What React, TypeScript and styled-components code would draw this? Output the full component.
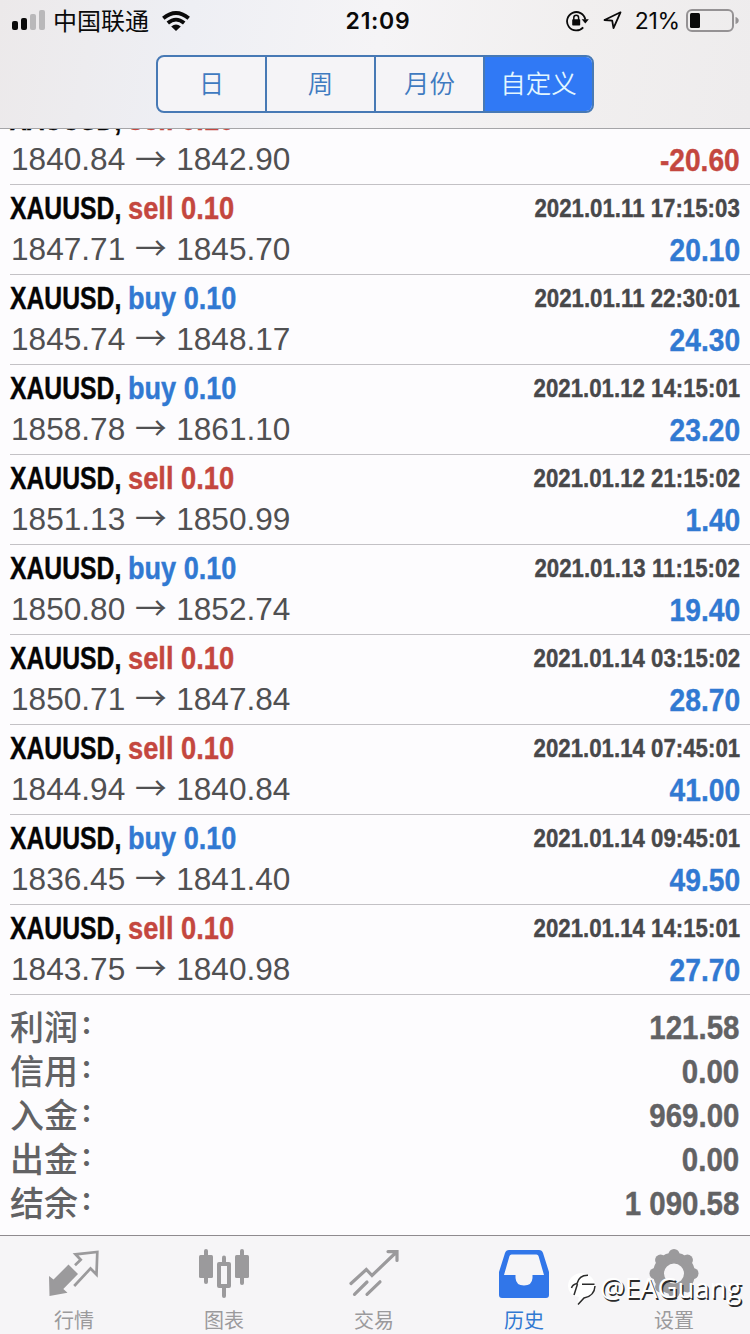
import React from "react";
import styled, { createGlobalStyle } from "styled-components";

const BLUE = "#3179d2";
const RED = "#c4473f";

const Global = createGlobalStyle`
  * { box-sizing: border-box; }
  body { margin: 0; background: #fdfcfe; }
`;

const Screen = styled.div`
  display: flex;
  flex-direction: column;
  width: 750px;
  height: 1334px;
  overflow: hidden;
  background: #fdfcfe;
  font-family: "Liberation Sans", "Noto Sans CJK SC", sans-serif;
`;

const Header = styled.header`
  flex: none;
  height: 129px;
  border-bottom: 1px solid #a5a5a8;
  background: linear-gradient(100deg, #ece9ea 0%, #eeeff4 25%, #f5f4f6 50%, #f1efef 75%, #eeeced 100%);
`;

const StatusBar = styled.div`
  display: grid;
  grid-template-columns: 1fr auto 1fr;
  align-items: center;
  height: 41px;
  padding: 0 11px 0 12px;
  color: #0a0a0a;
`;

const StatusGroup = styled.div<{ $end?: boolean }>`
  display: flex;
  align-items: center;
  justify-content: ${(p) => (p.$end ? "flex-end" : "flex-start")};
`;

const Carrier = styled.span`
  margin: 0 13px 0 8px;
  padding-bottom: 3px;
  font: 24px/37px "Noto Sans CJK SC", sans-serif;
`;

const Clock = styled.span`
  padding-left: 5px;
  font: 600 23px/40px Inter, sans-serif;
  letter-spacing: 0.7px;
`;

const Percent = styled.span`
  margin: 0 6px 0 13px;
  font: 23px/40px Inter, sans-serif;
  letter-spacing: -0.2px;
`;

const Segments = styled.div`
  display: flex;
  width: 438px;
  height: 58px;
  margin: 14px 0 0 156px;
  border: 2px solid #4779b5;
  border-radius: 8px;
  background: #f5f4f7;
  overflow: hidden;
`;

const Segment = styled.button<{ $active?: boolean }>`
  flex: 1;
  padding: 0 0 4px;
  border: 0;
  border-right: ${(p) => (p.$active ? "0" : "2px solid #4779b5")};
  background: ${(p) => (p.$active ? "#3079f5" : "transparent")};
  color: ${(p) => (p.$active ? "#e2f6ff" : "#3f7ac0")};
  font: 350 25.5px/50px "Noto Sans CJK SC", sans-serif;
`;

const History = styled.main`
  flex: none;
  height: 866px;
  overflow: hidden;
`;

const Deals = styled.div`
  margin-top: -34px;
`;

const Deal = styled.article`
  height: 90px;
  margin-left: 10px;
  padding-right: 10px;
  border-bottom: 1px solid #c3c1c5;
`;

const DealLine = styled.div<{ $h: number }>`
  display: flex;
  justify-content: space-between;
  height: ${(p) => p.$h}px;
  line-height: ${(p) => p.$h}px;
`;

const Narrow = styled.span<{ $scale: number; $size: number; $color: string; $right?: boolean }>`
  display: inline-block;
  transform: scaleX(${(p) => p.$scale});
  transform-origin: ${(p) => (p.$right ? "right" : "left")} center;
  color: ${(p) => p.$color};
  font-size: ${(p) => p.$size}px;
  font-weight: 700;
  -webkit-text-stroke: 0.4px currentColor;
  white-space: nowrap;
`;

const Title = styled.div`
  display: grid;
  grid-template-columns: 118px auto;
`;

const Prices = styled.div<{ $h: number }>`
  display: flex;
  height: ${(p) => p.$h}px;
  padding-left: 1px;
  line-height: ${(p) => p.$h}px;
  color: #505052;
  font-size: 31.6px;
`;

const Arrow = styled.span`
  width: 51px;
  text-align: center;
  font-family: "Noto Sans CJK SC", sans-serif;
  line-height: 29px;
`;

const Summary = styled.section`
  flex: 1;
  padding: 11px 11px 0 10px;
`;

const SummaryRow = styled.div`
  display: flex;
  justify-content: space-between;
  height: 44px;
  line-height: 44px;
`;

const SummaryLabel = styled.span`
  display: flex;
  height: 39px;
  color: #626264;
  font: 500 34px/39px "Noto Sans CJK SC", sans-serif;
`;

const Colon = styled.span`
  padding-left: 2px;
  font-size: 26px;
  font-weight: 700;
  line-height: 34px;
`;

const TabBar = styled.nav`
  position: relative;
  display: flex;
  flex: none;
  height: 99px;
  border-top: 1px solid #8f8b8f;
  background: #f6f5f7;
`;

const Tab = styled.div<{ $active?: boolean }>`
  display: flex;
  flex-direction: column;
  align-items: center;
  width: 150px;
  padding: 13px 2px 0 0;
  color: ${(p) => (p.$active ? BLUE : "#9b9a9c")};
`;

const TabLabel = styled.span`
  margin-top: 7px;
  font: 20px/28px "Noto Sans CJK SC", sans-serif;
`;

const Watermark = styled.div`
  position: absolute;
  left: 567px;
  top: 35px;
  display: flex;
  align-items: center;
  height: 36px;
  color: #fff;
  font: 400 27px/36px "Open Sans", sans-serif;
  text-shadow: 1.5px 1.5px 0 #2b2b2b;
  white-space: nowrap;
`;

const Handle = styled.span`
  display: inline-block;
  margin: -3px 0 0 3px;
  transform: scaleX(1.02);
  transform-origin: left center;
`;

const deals: [string, string, string, string, string][] = [
  ["sell", "1840.84", "1842.90", "2021.01.11 14:15:01", "-20.60"],
  ["sell", "1847.71", "1845.70", "2021.01.11 17:15:03", "20.10"],
  ["buy", "1845.74", "1848.17", "2021.01.11 22:30:01", "24.30"],
  ["buy", "1858.78", "1861.10", "2021.01.12 14:15:01", "23.20"],
  ["sell", "1851.13", "1850.99", "2021.01.12 21:15:02", "1.40"],
  ["buy", "1850.80", "1852.74", "2021.01.13 11:15:02", "19.40"],
  ["sell", "1850.71", "1847.84", "2021.01.14 03:15:02", "28.70"],
  ["sell", "1844.94", "1840.84", "2021.01.14 07:45:01", "41.00"],
  ["buy", "1836.45", "1841.40", "2021.01.14 09:45:01", "49.50"],
  ["sell", "1843.75", "1840.98", "2021.01.14 14:15:01", "27.70"],
];

const totals = [
  ["利润", "121.58"],
  ["信用", "0.00"],
  ["入金", "969.00"],
  ["出金", "0.00"],
  ["结余", "1 090.58"],
];

const Signal = () => (
  <svg width="33" height="21" viewBox="0 0 33 21">
    <rect x="0" y="11" width="6" height="9" rx="2" fill="#0a0a0a" />
    <rect x="9" y="8" width="6" height="12" rx="2" fill="#0a0a0a" />
    <rect x="18" y="4" width="6" height="16" rx="2" fill="#b9b8ba" />
    <rect x="27" y="0" width="6" height="20" rx="2" fill="#b9b8ba" />
  </svg>
);

const Wifi = () => (
  <svg width="28" height="20" viewBox="0 0 28 20" fill="none" stroke="#0a0a0a" strokeWidth="3.8">
    <path d="M1.3 7.3 Q14 -3.2 26.7 7.3" />
    <path d="M5.8 12 Q14 5.2 22.2 12" />
    <path d="M9.2 15.6 Q14 11.5 18.8 15.6 L14 20z" fill="#0a0a0a" stroke="none" />
  </svg>
);

const RotationLock = () => (
  <svg width="23" height="22" viewBox="0 0 23 22" fill="none" stroke="#0a0a0a" strokeWidth="1.8">
    <path d="M17.2 17.3 A9.2 9.2 0 1 1 19.3 9.5" />
    <path d="M15.7 9.2 H22.8 L19.3 13.6z" fill="#0a0a0a" stroke="none" />
    <rect x="6.2" y="9.3" width="8" height="6.3" rx="0.8" fill="#0a0a0a" stroke="none" />
    <path d="M7.8 10 V7.7 a2.4 2.4 0 0 1 4.8 0 V10" strokeWidth="1.5" />
  </svg>
);

const LocationSvg = styled.svg`
  margin-left: 14px;
`;

const Location = () => (
  <LocationSvg width="19" height="19" viewBox="0 0 19 19" fill="none" stroke="#0a0a0a" strokeWidth="1.8" strokeLinejoin="round">
    <path d="M17.5 1.3 L1.5 9 L9.2 9.7 L10.5 17.2z" />
  </LocationSvg>
);

const Battery = () => (
  <svg width="53" height="24" viewBox="0 0 53 24">
    <rect x="1" y="1" width="46" height="21" rx="5" fill="none" stroke="#959294" strokeWidth="2" />
    <rect x="4" y="4" width="10" height="15" rx="1.5" fill="#0a0a0a" />
    <path d="M49.5 8 Q52.7 9 52.7 11.5 T49.5 15z" fill="#959294" />
  </svg>
);

const QuotesIcon = () => (
  <svg width="50" height="50" viewBox="0 0 50 50">
    <path d="M0 27 L4.5 30.5 L19.5 15.5 L29 25 L14.3 40 L18.5 43.8 L0.5 47z" fill="currentColor" />
    <path d="M26 16.3 L31.7 10.8 L26.5 5.3 L48.3 3 L47.5 25.5 L41.5 19.5 L25.2 37" fill="none" stroke="currentColor" strokeWidth="2.7" />
  </svg>
);

const ChartIcon = () => (
  <svg width="50" height="50" viewBox="0 0 50 50" fill="currentColor">
    <rect x="5" y="0" width="4" height="35" rx="2" />
    <rect x="0" y="6" width="14" height="23" rx="1.5" />
    <rect x="41" y="0" width="4" height="36" rx="2" />
    <rect x="36" y="6" width="14" height="23" rx="1.5" />
    <rect x="23" y="6.5" width="4" height="8" rx="2" />
    <rect x="23" y="37" width="4" height="12" rx="2" />
    <rect x="20" y="15" width="10" height="22" fill="none" stroke="currentColor" strokeWidth="4" strokeLinejoin="round" />
  </svg>
);

const TradeIcon = () => (
  <svg width="50" height="50" viewBox="0 0 50 50" fill="none" stroke="currentColor" strokeWidth="3.2" strokeLinecap="round">
    <path d="M2 34.5 L17.3 20.5 L23 26.5 L47.5 3 M39 2.6 H48 V11.5" />
    <path d="M5.5 45.3 L18 33 M18 45.3 L31 32.8" />
  </svg>
);

const HistoryIcon = () => (
  <svg width="50" height="50" viewBox="0 0 50 50">
    <path
      d="M10 1 H40 Q43 1 44 4 L50 23 V46 Q50 49 47 49 H3 Q0 49 0 46 V23 L6 4 Q7 1 10 1z M12.5 5.5 Q11 5.5 10.5 7 L5 26 H16.5 V29 Q17 36.5 25 36.5 T33.5 29 V26 H45 L39.5 7 Q39 5.5 37.5 5.5z"
      fill="#3176e9"
      fillRule="evenodd"
    />
  </svg>
);

const SettingsIcon = () => (
  <svg width="50" height="50" viewBox="0 0 50 50">
    <circle cx="25" cy="24.5" r="15.5" fill="none" stroke="currentColor" strokeWidth="11" />
    {[0, 45, 90, 135, 180, 225, 270, 315].map((a) => (
      <circle key={a} cx="25" cy="5.5" r="5.5" fill="currentColor" transform={`rotate(${a} 25 24.5)`} />
    ))}
  </svg>
);

const WatermarkLogo = () => (
  <svg width="30" height="34" viewBox="0 0 30 34">
    <path d="M15 1 A14 13 0 0 1 28 15 Q27 25 16 26 L10 32 L12 25 Q1 23 1 14 A14 13 0 0 1 15 1z" fill="#fff" />
    <path d="M4.5 16 Q5.5 12.5 10 11.5 Q12 3 21 3.2 M10.5 12 L7 23 M15 12.3 H27.5 M28 14 Q27.5 24 17 26 L11 32.5" fill="none" stroke="#2b2b2b" strokeWidth="1.5" />
  </svg>
);

const tabs = [
  { label: "行情", Icon: QuotesIcon },
  { label: "图表", Icon: ChartIcon },
  { label: "交易", Icon: TradeIcon },
  { label: "历史", Icon: HistoryIcon },
  { label: "设置", Icon: SettingsIcon },
];

export default function App() {
  return (
    <Screen>
      <Global />
      <Header>
        <StatusBar>
          <StatusGroup>
            <Signal />
            <Carrier>中国联通</Carrier>
            <Wifi />
          </StatusGroup>
          <Clock>21:09</Clock>
          <StatusGroup $end>
            <RotationLock />
            <Location />
            <Percent>21%</Percent>
            <Battery />
          </StatusGroup>
        </StatusBar>
        <Segments>
          <Segment>日</Segment>
          <Segment>周</Segment>
          <Segment>月份</Segment>
          <Segment $active>自定义</Segment>
        </Segments>
      </Header>
      <History>
        <Deals>
          {deals.map(([side, open, close, time, profit], i) => (
            <Deal key={time + open}>
              <DealLine $h={i === 0 ? 48 : 47}>
                <Title>
                  <Narrow $scale={0.785} $size={31.5} $color="#050505">XAUUSD,</Narrow>
                  <Narrow $scale={side === "buy" ? 0.86 : 0.866} $size={31.5} $color={side === "buy" ? BLUE : RED}>{side} 0.10</Narrow>
                </Title>
                {i > 0 && <Narrow $right $scale={0.89} $size={25} $color="#48484a">{time}</Narrow>}
              </DealLine>
              <DealLine $h={i === 0 ? 35 : 36}>
                <Prices $h={i === 0 ? 33 : 35}>
                  <span>{open}</span>
                  <Arrow>→</Arrow>
                  <span>{close}</span>
                </Prices>
                <Narrow $right $scale={0.88} $size={32} $color={profit.startsWith("-") ? RED : BLUE}>{profit}</Narrow>
              </DealLine>
            </Deal>
          ))}
        </Deals>
      </History>
      <Summary>
        {totals.map(([label, value]) => (
          <SummaryRow key={label}>
            <SummaryLabel>
              {label}
              <Colon>：</Colon>
            </SummaryLabel>
            <Narrow $right $scale={0.88} $size={33.5} $color="#626264">{value}</Narrow>
          </SummaryRow>
        ))}
      </Summary>
      <TabBar>
        {tabs.map(({ label, Icon }) => (
          <Tab key={label} $active={label === "历史"}>
            <Icon />
            <TabLabel>{label}</TabLabel>
          </Tab>
        ))}
        <Watermark>
          <WatermarkLogo />
          <Handle>@EAGuang</Handle>
        </Watermark>
      </TabBar>
    </Screen>
  );
}
